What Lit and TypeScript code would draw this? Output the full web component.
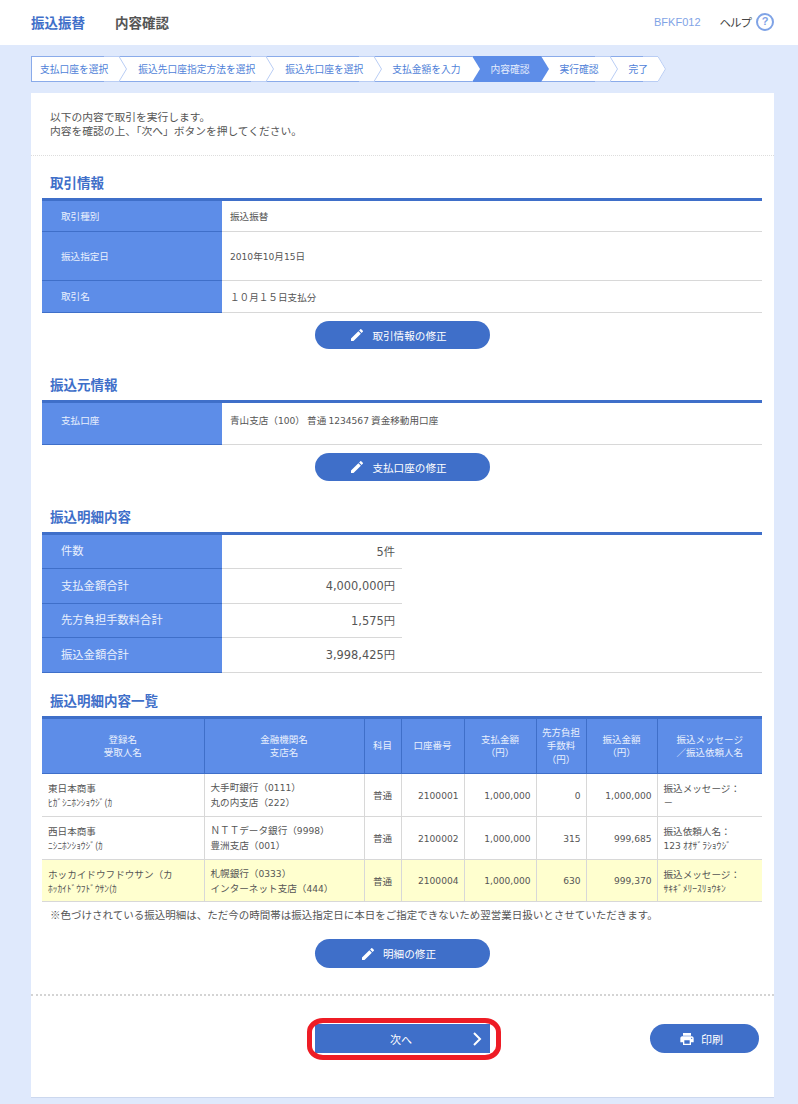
import { LitElement, html, css, svg } from "lit";
import { customElement } from "lit/decorators.js";

const steps = [
  "支払口座を選択",
  "振込先口座指定方法を選択",
  "振込先口座を選択",
  "支払金額を入力",
  "内容確認",
  "実行確認",
  "完了",
];

const pencil = html`<svg class="ico" viewBox="0 0 24 24" width="16" height="16"><path fill="#fff" d="M3 17.25V21h3.75L17.81 9.94l-3.75-3.75L3 17.25zM20.71 7.04a1 1 0 0 0 0-1.41l-2.34-2.34a1 1 0 0 0-1.41 0l-1.83 1.83 3.75 3.75 1.83-1.83z"/></svg>`;
const printer = html`<svg class="ico" viewBox="0 0 24 24" width="16" height="16"><path fill="#fff" d="M19 8H5c-1.66 0-3 1.34-3 3v6h4v4h12v-4h4v-6c0-1.66-1.34-3-3-3zm-3 11H8v-5h8v5zm3-7c-.55 0-1-.45-1-1s.45-1 1-1 1 .45 1 1-.45 1-1 1zm-1-9H6v4h12V3z"/></svg>`;

/* Latin digits sit in a wider face than the kanji around them */
const t = (s: string) =>
  s.split(/([0-9,]+)/).map((p, i) => (i % 2 ? html`<span class="n">${p}</span>` : p));

const rows = [
  {
    name: "東日本商事", kana: "ﾋｶﾞｼﾆﾎﾝｼｮｳｼﾞ(ｶ", bank: "大手町銀行（0111）", branch: "丸の内支店（222）",
    acct: "2100001", pay: "1,000,000", fee: "0", amt: "1,000,000", m1: "振込メッセージ：", m2: "－", hl: false,
  },
  {
    name: "西日本商事", kana: "ﾆｼﾆﾎﾝｼｮｳｼﾞ(ｶ", bank: "ＮＴＴデータ銀行（9998）", branch: "豊洲支店（001）",
    acct: "2100002", pay: "1,000,000", fee: "315", amt: "999,685", m1: "振込依頼人名：", m2: "123 ｵｵｻﾞﾗｼｮｳｼﾞ", hl: false,
  },
  {
    name: "ホッカイドウフドウサン（カ", kana: "ﾎｯｶｲﾄﾞｳﾌﾄﾞｳｻﾝ(ｶ", bank: "札幌銀行（0333）", branch: "インターネット支店（444）",
    acct: "2100004", pay: "1,000,000", fee: "630", amt: "999,370", m1: "振込メッセージ：", m2: "ｻｷｷﾞﾒﾘｰｽﾘｮｳｷﾝ", hl: true,
  },
];

@customElement("app-root")
export class AppRoot extends LitElement {
  static styles = css`
    :host {
      display: block;
      height: 1104px;
      overflow: hidden;
      background: #dfe9fc;
      color: #555;
      font-family: "Noto Sans CJK JP", "Noto Sans", sans-serif;
      font-size: 9.6px;
    }
    .n { font-family: "DejaVu Sans", sans-serif; font-size: 9.1px; }
    .top {
      height: 45px;
      box-sizing: border-box;
      padding: 0 24px 1px 31px;
      background: #fff;
      display: flex;
      align-items: center;
    }
    .top h1 { margin: 0; font-size: 13.5px; font-weight: 700; color: #3f6fc9; }
    .top h2 { margin: 0 0 0 30px; font-size: 13.5px; font-weight: 700; color: #555; }
    .code { margin-left: auto; font-family: "Liberation Sans", sans-serif; font-size: 11px; color: #7fa3e6; }
    .help { margin-left: 19px; font-size: 11.5px; color: #444; letter-spacing: -1px; }
    .q {
      margin-left: 5px;
      width: 18px;
      height: 18px;
      box-sizing: border-box;
      border: 2.5px solid #7fa3e6;
      border-radius: 50%;
      color: #7fa3e6;
      font: bold 11px/13px "Liberation Sans", sans-serif;
      text-align: center;
    }
    .stepper { display: flex; height: 26px; margin: 11px 0 0 31px; }
    .step {
      position: relative;
      box-sizing: border-box;
      height: 26px;
      padding: 0 11px 0 19px;
      background: #fff;
      border-top: 1px solid #8aabea;
      border-bottom: 1px solid #8aabea;
      color: #4f7fd8;
      font-size: 9.75px;
      line-height: 24px;
      white-space: nowrap;
    }
    .step span { position: relative; z-index: 2; }
    .step:first-child { padding-left: 8px; border-left: 1px solid #8aabea; }
    .step:nth-child(4) { padding-left: 18px; }
    .step:last-child { padding-right: 10px; }
    .step svg { position: absolute; right: -8px; top: -1px; z-index: 1; }
    .step.active { background: #5d8de8; border-color: #5d8de8; color: #e4ecfc; }
    .card {
      margin: 11px 24px 0 31px;
      height: 1004px;
      background: #fff;
      box-shadow: 0 1px 0 #ccd8ee;
      box-sizing: border-box;
    }
    .intro {
      height: 63px;
      box-sizing: border-box;
      padding: 17px 19px 0;
      font-size: 10.75px;
      line-height: 14px;
      border-bottom: 1px dotted #ddd;
    }
    .sec { padding: 0 12px 0 11px; }
    .sec h3 {
      margin: 0 0 7px 8px;
      padding-bottom: 2px;
      font-size: 13.5px;
      line-height: 14px;
      font-weight: 700;
      color: #3f6fc9;
    }
    .s1 { margin-top: 19px; }
    .s2 { margin-top: 28px; }
    .s4 { margin-top: 20px; }
    .info { border-top: 3px solid #3f6fc9; }
    .row { display: flex; box-sizing: border-box; border-bottom: 1px solid #d8d8d8; }
    .row .k {
      width: 180px;
      box-sizing: border-box;
      margin-bottom: -1px;
      padding: 0 0 1px 19px;
      background: #5d8de8;
      border-bottom: 1px solid #3f6fc9;
      color: #e9f0fd;
      display: flex;
      align-items: center;
    }
    .row .v { flex: 1; padding-left: 8px; display: flex; align-items: center; white-space: pre; }
    .h1 { height: 31px; }
    .h2 { height: 49px; }
    .h3 { height: 32px; }
    .h4 { height: 42px; }
    .row.h4 .k, .row.h4 .v { padding-bottom: 8px; }
    .sum { border-top: 3px solid #3f6fc9; }
    .sum .row { width: 360px; font-size: 11.3px; height: 35px; }
    .sum .row.first { height: 34px; }
    .sum .row.tight { height: 34px; }
    .sum .row.last { width: 720px; }
    .sum .row .k { padding-bottom: 3px; }
    .sum .row .v { flex: none; width: 180px; box-sizing: border-box; padding: 0 7px 2px 0; justify-content: flex-end; }
    .sum .n { font-size: 11.4px; }
    .btn {
      width: 175px;
      height: 28px;
      margin: 8px auto 0;
      box-sizing: border-box;
      background: #3f6fc9;
      border-radius: 14px;
      color: #fff;
      font-size: 10.6px;
      display: flex;
      align-items: center;
      justify-content: center;
      gap: 7px;
      padding-right: 8px;
      position: relative;
    }
    .ico { flex: none; }
    table {
      width: 720px;
      border-collapse: collapse;
      table-layout: fixed;
      border-top: 3px solid #3f6fc9;
      line-height: 14px;
    }
    th {
      height: 54px;
      padding: 0;
      background: #5d8de8;
      border-left: 1px solid #3f6fc9;
      border-bottom: 1px solid #3f6fc9;
      color: #e9f0fd;
      font-weight: 400;
      font-size: 9.5px;
      line-height: 13.5px;
    }
    th:first-child, td:first-child { border-left: none; }
    td {
      height: 42px;
      padding: 0 5px 0 6px;
      border-left: 1px solid #d8d8d8;
      border-bottom: 1px solid #d8d8d8;
      white-space: nowrap;
      overflow: hidden;
    }
    tr:last-child td { height: 41px; }
    tr.hl td { background: #ffffcf; }
    td.r { text-align: right; }
    td.c { text-align: center; padding: 0; }
    .kana { font-size: 9.4px; }
    .note { margin: 6px 0 0 8px; font-size: 10.5px; line-height: 14px; white-space: nowrap; }
    .s5 .btn { margin-top: 17px; height: 29px; border-radius: 15px; }
    .foot {
      margin-top: 26px;
      padding-top: 28px;
      border-top: 2px dotted #d4d4d4;
      display: grid;
      grid-template-columns: 1fr 175px 1fr;
    }
    .foot .btn { margin: 0; height: 29px; font-size: 11px; }
    .next { border-radius: 0; padding-right: 3px; }
    .next .chev { position: absolute; right: 8px; top: 7px; }
    .ring {
      position: absolute;
      left: -8px;
      right: -11px;
      top: -6px;
      bottom: -7px;
      border: 5px solid #ee1c25;
      border-radius: 16px / 14px;
    }
    .foot .print { width: 109px; justify-self: end; margin-right: 15px; border-radius: 15px; padding-right: 7px; gap: 6px; }
  `;

  private chevron(i: number) {
    if (i === 3) {
      return svg`<svg width="8" height="26" viewBox="0 0 8 26"><path fill="#fff" d="M0 0L8 13L0 26Z"/></svg>`;
    }
    if (i === 4) {
      return svg`<svg width="8" height="26" viewBox="0 0 8 26"><path fill="#5d8de8" d="M0 0L8 13L0 26Z"/></svg>`;
    }
    return svg`<svg width="23" height="26" viewBox="0 0 23 26"><path fill="#fff" d="M15 0L23 13L15 26Z"/><path fill="none" stroke="#b9cdf4" d="M0 .5H15L22.5 13L15 25.5H0"/></svg>`;
  }

  render() {
    return html`
      <div class="top">
        <h1>振込振替</h1>
        <h2>内容確認</h2>
        <span class="code">BFKF012</span>
        <span class="help">ヘルプ</span>
        <span class="q">?</span>
      </div>

      <div class="stepper">
        ${steps.map(
          (s, i) => html`<div class="step ${i === 4 ? "active" : ""}"><span>${s}</span>${this.chevron(i)}</div>`
        )}
      </div>

      <div class="card">
        <div class="intro">以下の内容で取引を実行します。<br />内容を確認の上、「次へ」ボタンを押してください。</div>

        <section class="sec s1">
          <h3>取引情報</h3>
          <div class="info">
            <div class="row h1"><div class="k">取引種別</div><div class="v">振込振替</div></div>
            <div class="row h2"><div class="k">振込指定日</div><div class="v"><span>${t("2010年10月15日")}</span></div></div>
            <div class="row h3"><div class="k">取引名</div><div class="v">１０月１５日支払分</div></div>
          </div>
          <div class="btn">${pencil}<span>取引情報の修正</span></div>
        </section>

        <section class="sec s2">
          <h3>振込元情報</h3>
          <div class="info">
            <div class="row h4"><div class="k">支払口座</div><div class="v"><span>${t("青山支店（100） 普通 1234567 資金移動用口座")}</span></div></div>
          </div>
          <div class="btn">${pencil}<span>支払口座の修正</span></div>
        </section>

        <section class="sec s2">
          <h3>振込明細内容</h3>
          <div class="sum">
            <div class="row first"><div class="k">件数</div><div class="v"><span>${t("5件")}</span></div></div>
            <div class="row"><div class="k">支払金額合計</div><div class="v"><span>${t("4,000,000円")}</span></div></div>
            <div class="row tight"><div class="k">先方負担手数料合計</div><div class="v"><span>${t("1,575円")}</span></div></div>
            <div class="row last"><div class="k">振込金額合計</div><div class="v"><span>${t("3,998,425円")}</span></div></div>
          </div>
        </section>

        <section class="sec s4 s5">
          <h3>振込明細内容一覧</h3>
          <table>
            <colgroup>
              <col style="width:162px" /><col style="width:160px" /><col style="width:37px" /><col style="width:63px" />
              <col style="width:72px" /><col style="width:50px" /><col style="width:71px" /><col style="width:105px" />
            </colgroup>
            <thead>
              <tr>
                <th>登録名<br />受取人名</th>
                <th>金融機関名<br />支店名</th>
                <th>科目</th>
                <th>口座番号</th>
                <th>支払金額<br />（円）</th>
                <th>先方負担<br />手数料<br />（円）</th>
                <th>振込金額<br />（円）</th>
                <th>振込メッセージ<br />／振込依頼人名</th>
              </tr>
            </thead>
            <tbody>
              ${rows.map(
                (r) => html`<tr class=${r.hl ? "hl" : ""}>
                  <td>${r.name}<br /><span class="kana">${r.kana}</span></td>
                  <td>${t(r.bank)}<br />${t(r.branch)}</td>
                  <td class="c">普通</td>
                  <td class="r">${t(r.acct)}</td>
                  <td class="r">${t(r.pay)}</td>
                  <td class="r">${t(r.fee)}</td>
                  <td class="r">${t(r.amt)}</td>
                  <td>${r.m1}<br />${t(r.m2)}</td>
                </tr>`
              )}
            </tbody>
          </table>
          <div class="note">※色づけされている振込明細は、ただ今の時間帯は振込指定日に本日をご指定できないため翌営業日扱いとさせていただきます。</div>
          <div class="btn">${pencil}<span>明細の修正</span></div>
        </section>

        <div class="foot">
          <span></span>
          <div class="btn next">
            <span>次へ</span>
            <svg class="chev" width="10" height="16" viewBox="0 0 10 16"><path fill="none" stroke="#fff" stroke-width="2" d="M2 2l6 6-6 6"/></svg>
            <div class="ring"></div>
          </div>
          <div class="btn print">${printer}<span>印刷</span></div>
        </div>
      </div>
    `;
  }
}
